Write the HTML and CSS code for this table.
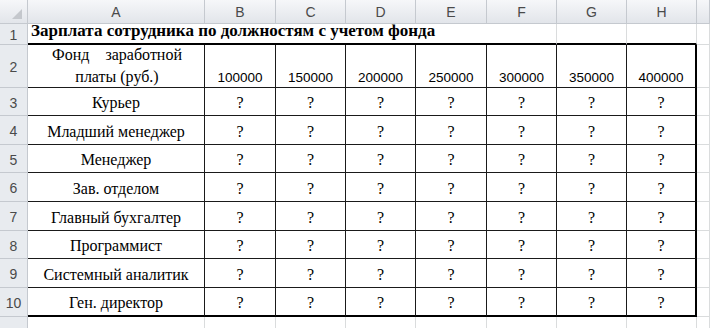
FILE: index.html
```html
<!DOCTYPE html>
<html lang="ru">
<head>
    <meta charset="UTF-8">
    <title>Зарплата сотрудника</title>
    <link rel="stylesheet" href="styles.css">
</head>
<body>
    <div class="sheet">
        <!-- column headings -->
        <div class="hd corner"><span class="corner-mark"></span></div>
        <div class="hd col-hd">A</div>
        <div class="hd col-hd">B</div>
        <div class="hd col-hd">C</div>
        <div class="hd col-hd">D</div>
        <div class="hd col-hd">E</div>
        <div class="hd col-hd">F</div>
        <div class="hd col-hd">G</div>
        <div class="hd col-hd">H</div>
        <div class="hd col-hd"></div>

        <!-- row 1 -->
        <div class="hd row-hd">1</div>
        <div class="cell title top-edge">Зарплата сотрудника по должностям с учетом фонда</div>
        <div class="cell top-edge"></div>
        <div class="cell top-edge"></div>
        <div class="cell top-edge"></div>
        <div class="cell"></div>

        <!-- row 2 -->
        <div class="hd row-hd">2</div>
        <div class="cell t fund">
            <div class="fund-text">
                <div class="fund-top"><span>Фонд</span><span>заработной</span></div>
                <div class="fund-bottom">платы (руб.)</div>
            </div>
        </div>
        <div class="cell t num">100000</div>
        <div class="cell t num">150000</div>
        <div class="cell t num">200000</div>
        <div class="cell t num">250000</div>
        <div class="cell t num">300000</div>
        <div class="cell t num">350000</div>
        <div class="cell t num right-edge">400000</div>
        <div class="cell"></div>
    </div>

    <script>
        // rows 3..10 are all the same shape, build them from a list
        const sheet = document.querySelector(".sheet");
        const posts = [
            "Курьер",
            "Младший менеджер",
            "Менеджер",
            "Зав. отделом",
            "Главный бухгалтер",
            "Программист",
            "Системный аналитик",
            "Ген. директор"
        ];

        let html = "";
        posts.forEach((post, i) => {
            const last = i === posts.length - 1 ? " bottom-edge" : "";
            html += `<div class="hd row-hd">${i + 3}</div>`;
            html += `<div class="cell t name${last}">${post}</div>`;
            for (let c = 0; c < 7; c++) {
                const edge = c === 6 ? " right-edge" : "";
                html += `<div class="cell t q${last}${edge}">?</div>`;
            }
            html += `<div class="cell"></div>`;
        });

        // row 11, cut off by the window
        html += `<div class="hd row-hd"></div>`;
        for (let c = 0; c < 9; c++) {
            html += `<div class="cell"></div>`;
        }
        sheet.insertAdjacentHTML("beforeend", html);
    </script>
</body>
</html>
```

FILE: styles.css
```css
body {
    margin: 0;
    background: #fff;
    overflow: hidden;
}
.sheet {
    display: grid;
    grid-template-columns: 28px 177px 71px 70px 70px 71px 70px 70px 70px 1fr;
    grid-template-rows: 24px 21px 43px 28px 29px 28px 29px 29px 28px 29px 29px 20px;
    width: 710px;
    height: 328px;
    font-family: "Liberation Serif", "Times New Roman", serif;
    font-size: 16px;
    color: #000;
}
.hd {
    box-sizing: border-box;
    border-right: 1px solid #c5c9cf;
    border-bottom: 1px solid #c5c9cf;
    font-family: "Liberation Sans", Arial, sans-serif;
    font-size: 14px;
    color: #4a4a4a;
    display: flex;
    align-items: center;
    justify-content: center;
}
.col-hd {
    background: linear-gradient(#f6f7f9, #e2e5ea);
    padding-top: 1px;
}
.row-hd {
    background: #e8ebef;
    padding-top: 2px;
}
.corner {
    background: linear-gradient(#f6f7f9, #e2e5ea);
    justify-content: flex-end;
    align-items: flex-end;
    padding: 0 5px 4px 0;
}
.corner-mark {
    width: 0;
    height: 0;
    border-left: 10px solid transparent;
    border-bottom: 10px solid #c4c7cc;
}
.cell {
    box-sizing: border-box;
    border-right: 1px solid #dadcdd;
    border-bottom: 1px solid #dadcdd;
    display: flex;
    align-items: flex-end;
    justify-content: center;
    white-space: nowrap;
}
.cell.t {
    border-right-color: #1a1a1a;
    border-bottom-color: #1a1a1a;
}
.top-edge {
    border-bottom: 2px solid #000;
}
.right-edge.cell {
    border-right: 2px solid #000;
}
.bottom-edge.cell {
    border-bottom: 2px solid #000;
}
.title {
    grid-column: 2 / 7;
    justify-content: flex-start;
    padding: 0 0 2px 3px;
    font-size: 17px;
    font-weight: bold;
    border-right: none;
}
.fund {
    align-items: center;
    padding: 0 22px 0 24px;
}
.fund-text {
    flex: 1;
    line-height: 22px;
}
.fund-top {
    display: flex;
    justify-content: space-between;
}
.fund-bottom {
    text-align: center;
}
.num {
    font-family: "Liberation Sans", Arial, sans-serif;
    font-size: 13.5px;
    padding-bottom: 2px;
}
.name,
.q {
    padding-bottom: 3px;
}
```
